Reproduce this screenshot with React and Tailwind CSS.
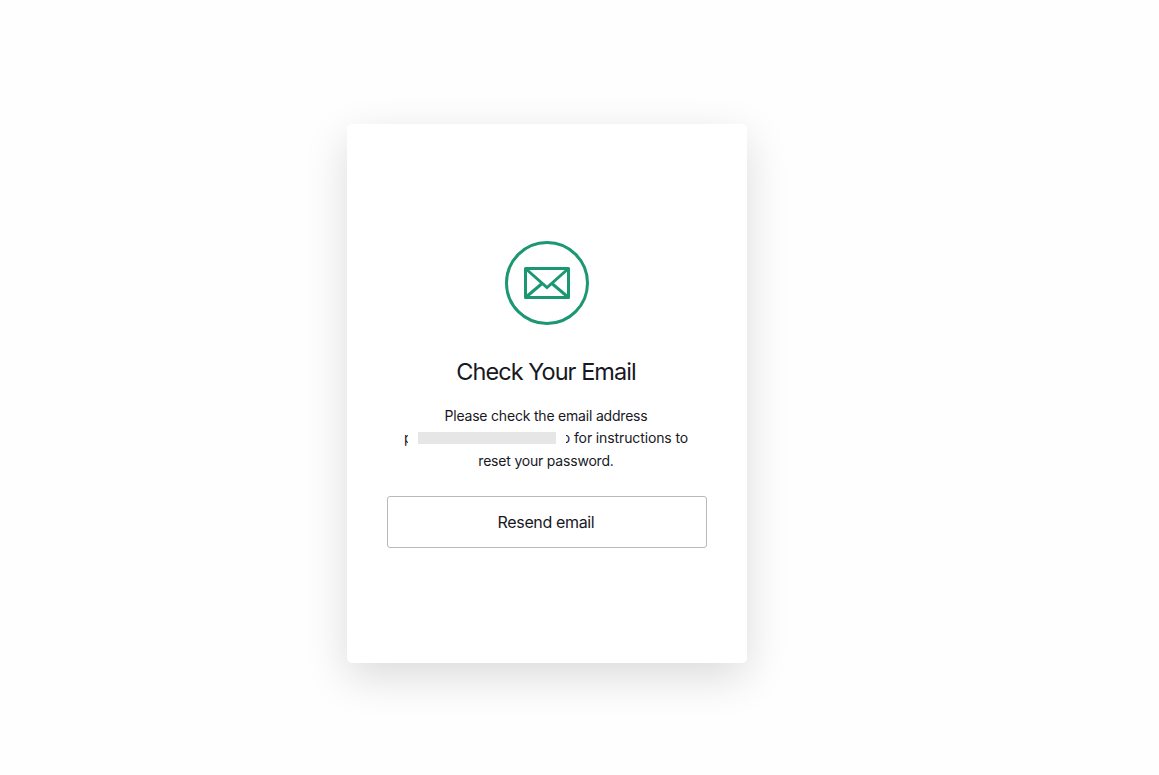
export default function App() {
  return (
    <main className="flex h-[775px] w-[1159px] flex-col bg-[#fefefe] pt-[124px] pl-[347px] font-['Inter',sans-serif] text-[#18181f]">
      <section className="flex h-[539px] w-[400px] flex-col items-center rounded-[5px] bg-white px-10 pt-[117px] shadow-[0_14px_44px_rgba(0,0,0,0.14)]">
        <svg className="size-[84px] shrink-0" viewBox="0 0 84 84" fill="none" stroke="#1b9772" strokeWidth="3">
          <circle cx="42" cy="42" r="40.5" />
          <rect x="20.5" y="27.5" width="43" height="29" strokeLinejoin="round" />
          <path d="M20.5 27.5 42 46.5 63.5 27.5M20.5 56.5 36.5 43M63.5 56.5 47.5 43" />
        </svg>
        <h1 className="mt-8 -ml-0.5 text-[23.5px] leading-[30px] tracking-[-0.95px] whitespace-nowrap">Check Your Email</h1>
        <div className="mt-[17px] -ml-0.5 flex flex-col items-center text-sm tracking-[-0.2px] whitespace-nowrap">
          <p className="h-[22px] leading-[23px]">Please check the email address</p>
          <p className="flex h-[23px] items-center leading-[23px]">
            <span className="w-1 overflow-hidden">p</span>
            <span className="mr-[10px] ml-[10px] h-3 w-[138px] bg-[#e6e6e6]" />
            <span className="flex w-1 justify-end overflow-hidden">o</span>
            <span className="ml-1 tracking-[-0.12px]">for instructions to</span>
          </p>
          <p className="h-[22px] leading-[23px]">reset your password.</p>
        </div>
        <button className="mt-[25px] h-[52px] w-full shrink-0 rounded-[3px] border border-[#bababd] pr-0.5 text-base tracking-[-0.35px]">Resend email</button>
      </section>
    </main>
  );
}
